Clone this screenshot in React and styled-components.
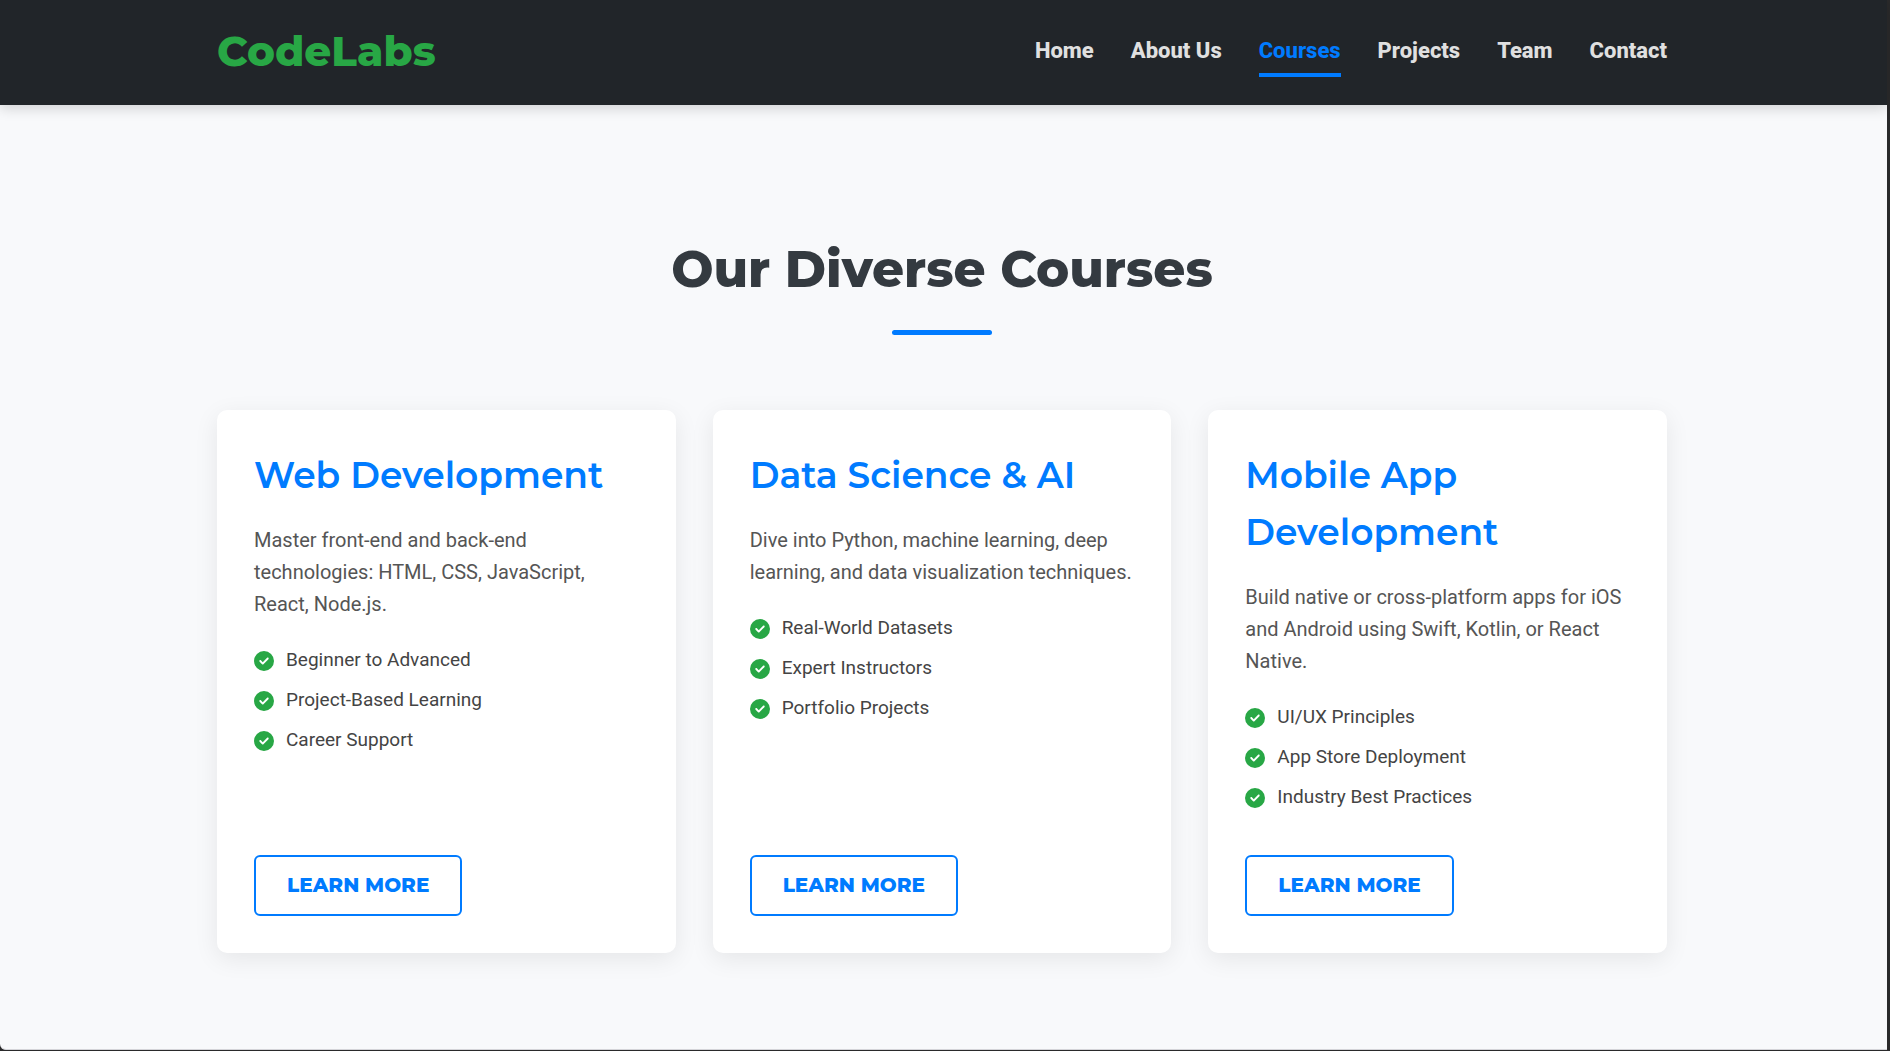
import React from "react";
import styled, { createGlobalStyle } from "styled-components";
import { FaCircleCheck } from "react-icons/fa6";

const display = `Montserrat, Inter, "Open Sans", sans-serif`;

const GlobalStyle = createGlobalStyle`
  *, *::before, *::after { box-sizing: border-box; }
  body {
    margin: 0;
    background: #2a2a2b;
    color: #333;
    font-family: Roboto, "Liberation Sans", sans-serif;
    font-size: 20px;
    line-height: 32px;
  }
  h1, h2, p, ul { margin: 0; padding: 0; }
  ul { list-style: none; }
`;

const Page = styled.div`
  min-height: calc(100vh - 1px);
  margin: 0 3px 1px 0;
  background: #f8f9fb;
  border-bottom: 1px solid #d4d4d8;
  border-bottom-left-radius: 6px;
`;

const Header = styled.header`
  background: #212529;
  padding: 18px 23px 22px 20px;
  box-shadow: 0 4px 12px rgba(0, 0, 0, 0.15);
`;

const Container = styled.div`
  max-width: 1450px;
  margin: 0 auto;
`;

const Bar = styled(Container)`
  display: flex;
  align-items: center;
  justify-content: space-between;
  height: 65px;
`;

const Logo = styled.a`
  color: #28a745;
  font-family: ${display};
  font-size: 42px;
  font-weight: 800;
  line-height: 64px;
  text-decoration: none;
`;

const NavList = styled.ul`
  display: flex;
  gap: 37px;
`;

const NavLink = styled.a`
  display: block;
  padding: 8px 0 4px;
  border-bottom: 4px solid ${(p) => (p.$active ? "#007bff" : "transparent")};
  color: ${(p) => (p.$active ? "#007bff" : "#e0e0e0")};
  font-size: 22px;
  font-weight: 800;
  line-height: 36px;
  text-decoration: none;
`;

const Section = styled.main`
  padding: 125px 23px 96px 20px;
`;

const Heading = styled.h1`
  display: flex;
  flex-direction: column;
  align-items: center;
  gap: 20px;
  margin-bottom: 75px;
  color: #343a40;
  font-family: ${display};
  font-size: 50px;
  font-weight: 800;
  line-height: 80px;

  &::after {
    content: "";
    width: 100px;
    height: 5px;
    border-radius: 3px;
    background: #007bff;
  }
`;

const Grid = styled.div`
  display: grid;
  grid-template-columns: repeat(auto-fit, minmax(380px, 1fr));
  gap: 37px;
`;

const Card = styled.article`
  display: flex;
  flex-direction: column;
  align-items: flex-start;
  padding: 37px;
  border-radius: 10px;
  background: #fff;
  box-shadow: 0 6px 25px rgba(0, 0, 0, 0.08);
`;

const CardTitle = styled.h2`
  margin-bottom: 20px;
  color: #007bff;
  font-family: ${display};
  font-size: 36px;
  font-weight: 600;
  line-height: 57px;
`;

const Description = styled.p`
  margin-bottom: 25px;
  color: #555;
`;

const Features = styled.ul`
  display: grid;
  gap: 10px;
  margin-bottom: 43px;
`;

const Feature = styled.li`
  display: flex;
  align-items: center;
  gap: 12px;
  color: #444;
  font-size: 19px;
  line-height: 30px;

  svg {
    flex: none;
    width: 20px;
    height: 20px;
    margin-top: 2px;
    color: #28a745;
  }
`;

const Button = styled.button`
  margin-top: auto;
  padding: 0 31px;
  border: 2px solid #007bff;
  border-radius: 6px;
  background: transparent;
  color: #007bff;
  font-family: ${display};
  font-size: 20px;
  font-weight: 800;
  line-height: 57px;
  text-transform: uppercase;
  cursor: pointer;
`;

const links = ["Home", "About Us", "Courses", "Projects", "Team", "Contact"];

const courses = [
  {
    title: "Web Development",
    text: "Master front-end and back-end technologies: HTML, CSS, JavaScript, React, Node.js.",
    features: ["Beginner to Advanced", "Project-Based Learning", "Career Support"],
  },
  {
    title: "Data Science & AI",
    text: "Dive into Python, machine learning, deep learning, and data visualization techniques.",
    features: ["Real-World Datasets", "Expert Instructors", "Portfolio Projects"],
  },
  {
    title: "Mobile App Development",
    text: "Build native or cross-platform apps for iOS and Android using Swift, Kotlin, or React Native.",
    features: ["UI/UX Principles", "App Store Deployment", "Industry Best Practices"],
  },
];

export default function App() {
  return (
    <>
      <GlobalStyle />
      <Page>
        <Header>
          <Bar>
            <Logo href="#home">CodeLabs</Logo>
            <nav>
              <NavList>
                {links.map((name) => (
                  <li key={name}>
                    <NavLink href="#" $active={name === "Courses"}>
                      {name}
                    </NavLink>
                  </li>
                ))}
              </NavList>
            </nav>
          </Bar>
        </Header>
        <Section>
          <Container>
            <Heading>Our Diverse Courses</Heading>
            <Grid>
              {courses.map((course) => (
                <Card key={course.title}>
                  <CardTitle>{course.title}</CardTitle>
                  <Description>{course.text}</Description>
                  <Features>
                    {course.features.map((feature) => (
                      <Feature key={feature}>
                        <FaCircleCheck aria-hidden="true" />
                        {feature}
                      </Feature>
                    ))}
                  </Features>
                  <Button type="button">Learn More</Button>
                </Card>
              ))}
            </Grid>
          </Container>
        </Section>
      </Page>
    </>
  );
}
